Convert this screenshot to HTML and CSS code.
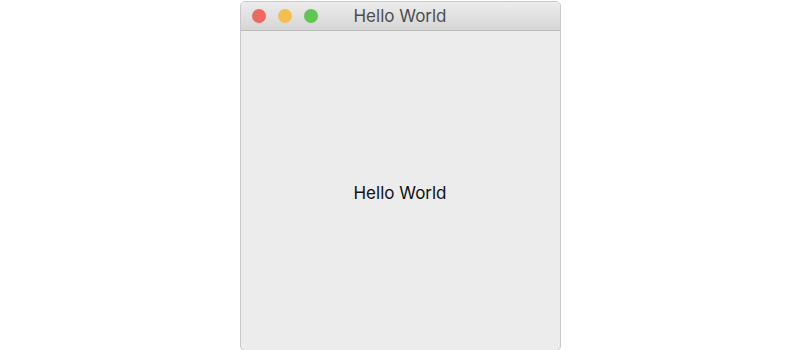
FILE: index.html
```html
<!DOCTYPE html>
<html lang="en">
<head>
    <meta charset="UTF-8">
    <title>Hello World</title>
    <link rel="stylesheet" href="styles.css">
</head>
<body>

<div class="window">
    <!-- Barre de titre -->
    <div class="titlebar">
        <div class="lights">
            <span class="light red"></span>
            <span class="light yellow"></span>
            <span class="light green"></span>
        </div>
        <div class="title">Hello World</div>
    </div>

    <div class="content">
        <div class="label">Hello World</div>
    </div>
</div>

</body>
</html>
```

FILE: styles.css
```css
body {
    margin: 0;
    padding: 0;
    background-color: #ffffff;
    font-family: "Inter", "Liberation Sans", sans-serif;
}
.window {
    width: 319px;
    height: 348px;
    margin: 1px auto 0;
    display: flex;
    flex-direction: column;
    border: 1px solid #c9c9c9;
    border-radius: 5px;
    overflow: hidden;
    background-color: #ececec;
}
.titlebar {
    height: 28px;
    display: flex;
    align-items: center;
    justify-content: center;
    position: relative;
    background: linear-gradient(#ececec, #d6d6d6);
    border-bottom: 1px solid #bdbdbd;
}
.lights {
    position: absolute;
    left: 11px;
    top: 7px;
    display: flex;
    gap: 12px;
}
.light {
    width: 14px;
    height: 14px;
    border-radius: 50%;
}
.red {
    background-color: #ee6a5f;
}
.yellow {
    background-color: #f5bf4f;
}
.green {
    background-color: #61c554;
}
.title {
    font-size: 17px;
    color: #4d4d4d;
}
.content {
    flex-grow: 1;
    display: flex;
    align-items: center;
    justify-content: center;
    padding-top: 4px;
}
.label {
    font-size: 17px;
    color: #111111;
}
```
